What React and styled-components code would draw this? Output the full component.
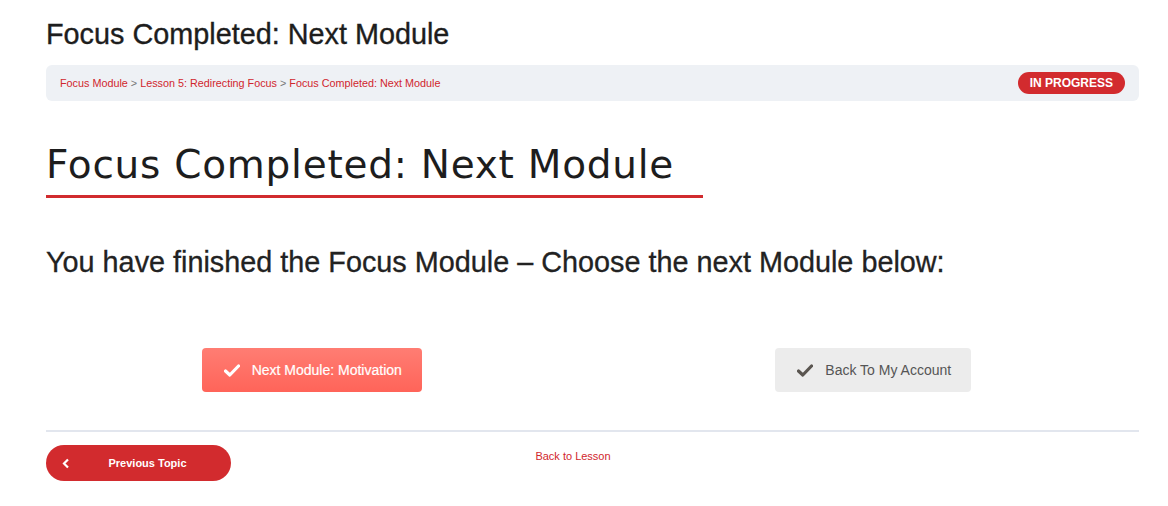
import React from 'react';
import styled, { createGlobalStyle } from 'styled-components';

const GlobalStyle = createGlobalStyle`
  body {
    margin: 0;
    background: #fff;
    font-family: "Liberation Sans", Arial, sans-serif;
  }
`;

const Page = styled.div`
  padding: 18px 29px 0 46px;
`;

const TopTitle = styled.h1`
  margin: 0 0 15px;
  font-size: 28.8px;
  font-weight: 400;
  -webkit-text-stroke: 0.35px #1d1d1d;
  color: #1d1d1d;
  line-height: 32px;
`;

const Breadcrumbs = styled.div`
  display: flex;
  align-items: center;
  justify-content: space-between;
  height: 36px;
  padding: 0 14px;
  background: #eef1f5;
  border-radius: 6px;
`;

const Crumbs = styled.div`
  font-size: 10.8px;
  color: #777;
`;

const Crumb = styled.a`
  color: #d1262d;
  text-decoration: none;
`;

const Badge = styled.span`
  background: #d22b2e;
  color: #fff;
  font-size: 12px;
  font-weight: 700;
  border-radius: 12px;
  padding: 5px 12px;
  line-height: 12px;
`;

const Heading = styled.h2`
  display: inline-block;
  margin: 42px 0 0;
  padding-bottom: 8px;
  padding-right: 29px;
  border-bottom: 3px solid #d12b2e;
  font-family: "DejaVu Sans", sans-serif;
  font-weight: 400;
  font-size: 39px;
  letter-spacing: 0.75px;
  line-height: 44px;
  color: #1d1d1d;
`;

const Lead = styled.p`
  margin: 48px 0 0;
  font-size: 28.8px;
  line-height: 32px;
  color: #222;
  -webkit-text-stroke: 0.3px #222;
`;

const ButtonRow = styled.div`
  display: grid;
  grid-template-columns: 1fr 1fr;
  column-gap: 30px;
  margin-top: 70px;
`;

const Cell = styled.div`
  display: flex;
  justify-content: center;
`;

const ActionButton = styled.a`
  display: inline-flex;
  align-items: center;
  gap: 12px;
  height: 44px;
  padding: 0 20px 0 22px;
  border-radius: 4px;
  font-size: 14px;
  text-decoration: none;
  box-sizing: border-box;
  background: ${p => (p.$primary ? 'linear-gradient(#ff7d73, #ff6459)' : '#ececec')};
  color: ${p => (p.$primary ? '#fff' : '#555')};
  -webkit-text-stroke: ${p => (p.$primary ? '0.2px #fff' : '0')};
`;

const Divider = styled.hr`
  border: 0;
  border-top: 2px solid #e2e6ee;
  margin: 38px 0 13px;
`;

const NavRow = styled.div`
  display: grid;
  grid-template-columns: 185px 1fr 224px;
  align-items: center;
`;

const PrevButton = styled.a`
  display: flex;
  align-items: center;
  height: 36px;
  padding: 0 16px;
  background: #d22b2e;
  color: #fff;
  border-radius: 18px;
  font-size: 11px;
  font-weight: 700;
  text-decoration: none;
`;

const PrevLabel = styled.span`
  flex: 1;
  text-align: center;
  padding-left: 10px;
`;

const LessonLink = styled.a`
  justify-self: center;
  margin-top: -15px;
  color: #d1262d;
  font-size: 11px;
  text-decoration: none;
`;

const Check = ({ color }) => (
  <svg width="16" height="13" viewBox="0 0 16 13">
    <path d="M1.5 7 L5.8 11 L14.5 2" fill="none" stroke={color} strokeWidth="3.2" strokeLinecap="round" strokeLinejoin="round" />
  </svg>
);

const App = () => (
  <>
    <GlobalStyle />
    <Page>
      <TopTitle>Focus Completed: Next Module</TopTitle>
      <Breadcrumbs>
        <Crumbs>
          <Crumb>Focus Module</Crumb> &gt; <Crumb>Lesson 5: Redirecting Focus</Crumb> &gt;{' '}
          <Crumb>Focus Completed: Next Module</Crumb>
        </Crumbs>
        <Badge>IN PROGRESS</Badge>
      </Breadcrumbs>

      <Heading>Focus Completed: Next Module</Heading>

      <Lead>You have finished the Focus Module – Choose the next Module below:</Lead>

      <ButtonRow>
        <Cell>
          <ActionButton $primary>
            <Check color="#fff" />
            Next Module: Motivation
          </ActionButton>
        </Cell>
        <Cell>
          <ActionButton>
            <Check color="#5a5550" />
            Back To My Account
          </ActionButton>
        </Cell>
      </ButtonRow>

      <Divider />

      <NavRow>
        <PrevButton>
          <svg width="8" height="11" viewBox="0 0 8 11">
            <path d="M6 1.5 L2 5.5 L6 9.5" fill="none" stroke="#fff" strokeWidth="2.2" />
          </svg>
          <PrevLabel>Previous Topic</PrevLabel>
        </PrevButton>
        <LessonLink>Back to Lesson</LessonLink>
        <div />
      </NavRow>
    </Page>
  </>
);

export default App;
